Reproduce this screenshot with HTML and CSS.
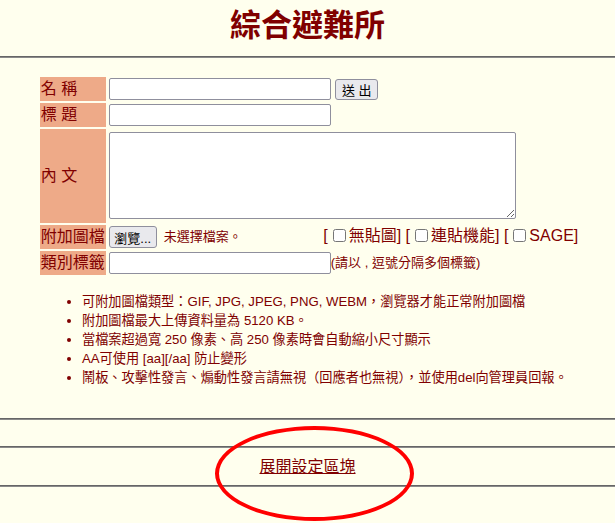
FILE: index.html
```html
<!DOCTYPE html>
<html lang="zh-Hant">

<head>
    <meta charset="utf-8">
    <title>綜合避難所</title>
    <link rel="stylesheet" href="styles.css">
</head>

<body>
    <h1 class="board-title">綜合避難所</h1>
    <hr class="divider">

    <!-- post form -->
    <form class="post-form" onsubmit="return false">
        <table class="form-table">
            <tr>
                <td class="form-label">名 稱</td>
                <td><input type="text" class="field"> <button class="btn-send">送 出</button></td>
            </tr>
            <tr>
                <td class="form-label">標 題</td>
                <td><input type="text" class="field"></td>
            </tr>
            <tr>
                <td class="form-label">內 文</td>
                <td><textarea class="field-body"></textarea></td>
            </tr>
            <tr>
                <td class="form-label">附加圖檔</td>
                <td class="file-cell"><span class="file-pick"><button type="button" class="btn-browse">瀏覽...</button><span class="file-none">未選擇檔案。</span></span> [<input type="checkbox">無貼圖] [<input type="checkbox">連貼機能] [<input type="checkbox">SAGE]</td>
            </tr>
            <tr>
                <td class="form-label">類別標籤</td>
                <td><input type="text" class="field"><span class="hint">(請以 , 逗號分隔多個標籤)</span></td>
            </tr>
        </table>
    </form>

    <ul class="rules">
        <li>可附加圖檔類型：GIF, JPG, JPEG, PNG, WEBM，瀏覽器才能正常附加圖檔</li>
        <li>附加圖檔最大上傳資料量為 5120 KB。</li>
        <li>當檔案超過寬 250 像素、高 250 像素時會自動縮小尺寸顯示</li>
        <li>AA可使用 [aa][/aa] 防止變形</li>
        <li>鬧板、攻擊性發言、煽動性發言請無視（回應者也無視），並使用del向管理員回報。</li>
    </ul>

    <hr class="divider">
    <hr class="divider gap">
    <div class="settings-toggle"><a href="#">展開設定區塊</a></div>
    <hr class="divider">

    <!-- red highlight mark over the toggle -->
    <div class="highlight-ring"></div>
</body>

</html>
```

FILE: styles.css
```css
body {
    margin: 0;
    background: #FFFFEE;
    color: #800000;
    font-family: "Liberation Sans", "Noto Sans CJK TC", sans-serif;
    position: relative;
    min-height: 523px;
}

.board-title {
    margin: 6px 0 0;
    font-size: 31px;
    line-height: 40px;
    font-weight: bold;
    text-align: center;
    color: #800000;
}

.divider {
    margin: 10px 0 0;
    height: 0;
    border: 0;
    border-top: 1px solid #666;
    border-bottom: 1px solid #8a8a8a;
}

.post-form {
    margin-top: 17px;
    padding-left: 4px;
}

.form-table {
    margin: 0 auto;
    border-spacing: 2px;
}

.form-table td {
    padding: 1px;
    font-size: 16px;
    line-height: 20px;
}

.form-label {
    background: #EEAA88;
    color: #800000;
    white-space: nowrap;
}

.field {
    box-sizing: border-box;
    width: 222px;
    height: 22px;
    margin: 0;
    padding: 1px 2px;
    border: 1px solid #8f8f9d;
    border-radius: 2px;
    background: #fff;
    vertical-align: middle;
}

.btn-send, .btn-browse {
    box-sizing: border-box;
    margin: 0;
    padding: 0 4px;
    border: 1px solid #8f8f9d;
    border-radius: 3px;
    background: #e9e9ed;
    color: #000;
    font-family: "Liberation Sans", "Noto Sans CJK TC", sans-serif;
    font-size: 13px;
    white-space: nowrap;
    vertical-align: middle;
}

.btn-send {
    width: 43px;
    height: 21px;
}

.btn-browse {
    width: 48px;
    height: 22px;
}

.field-body {
    display: block;
    box-sizing: border-box;
    width: 407px;
    height: 87px;
    margin: 2px 0 3px;
    border: 1px solid #8f8f9d;
    border-radius: 2px;
    background: #fff;
}

.file-cell {
    white-space: nowrap;
}

.file-pick {
    display: inline-flex;
    align-items: center;
    gap: 7px;
    width: 210px;
    vertical-align: middle;
}

.file-none {
    font-size: 13px;
}

.file-cell input[type=checkbox] {
    width: 13px;
    height: 13px;
    margin: 0 3px 0 5px;
    vertical-align: -1px;
}

.hint {
    font-size: 13px;
    vertical-align: middle;
}

.rules {
    margin: 15px 0 0;
    padding: 0 0 0 82px;
    font-size: 13.2px;
    line-height: 19px;
}

.divider.gap {
    margin-top: 26px;
}

.rules + .divider {
    margin-top: 31px;
}

.settings-toggle {
    text-align: center;
    font-size: 16px;
    line-height: 37px;
}

.settings-toggle a {
    color: #800000;
}

.settings-toggle + .divider {
    margin-top: 0;
}

.highlight-ring {
    position: absolute;
    left: 215px;
    top: 426px;
    width: 191px;
    height: 87px;
    border: 4px solid #f00;
    border-radius: 50%;
}
```
